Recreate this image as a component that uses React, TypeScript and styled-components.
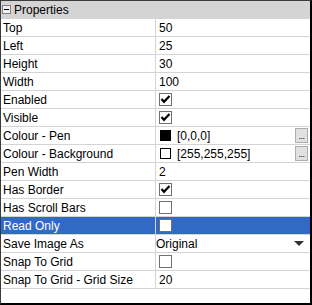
import React from "react"
import styled, { createGlobalStyle } from "styled-components"

const GlobalStyle = createGlobalStyle`
  html, body {
    margin: 0;
    padding: 0;
    background: #ffffff;
  }
  * {
    box-sizing: border-box;
  }
`

const Panel = styled.div`
  width: 312px;
  height: 305px;
  background: #ffffff;
  border-left: 1px solid #3c3c3c;
  border-top: 1px solid #3c3c3c;
  border-right: 2px solid #000000;
  border-bottom: 2px solid #000000;
  font-family: "Liberation Sans", Arial, sans-serif;
  font-size: 12px;
  color: #000000;
  overflow: hidden;
`

const Header = styled.div`
  height: 18px;
  background: #d4d4d4;
  display: flex;
  align-items: center;
  gap: 3px;
  padding-left: 1px;
  border-bottom: 1px solid #d4d4d4;
`

const Collapse = styled.span`
  width: 9px;
  height: 9px;
  border: 1px solid #808080;
  background: #f0f0f0;
  display: flex;
  align-items: center;
  justify-content: center;
  &::after {
    content: "";
    width: 5px;
    height: 1px;
    background: #000000;
  }
`

const Grid = styled.div`
  display: grid;
  grid-template-columns: 155px 1fr;
`

const Cell = styled.div<{ $selected?: boolean }>`
  height: 18px;
  border-bottom: 1px solid #d4d4d4;
  display: flex;
  align-items: center;
  background: ${(p) => (p.$selected ? "#316ac5" : "#ffffff")};
  color: ${(p) => (p.$selected ? "#ffffff" : "#000000")};
  white-space: nowrap;
`

const Label = styled(Cell)`
  padding-left: 2px;
  border-right: 1px solid #d4d4d4;
`

const Value = styled(Cell)<{ $tight?: boolean }>`
  padding-left: ${(p) => (p.$tight ? "0px" : "3px")};
  padding-right: 2px;
  gap: 6px;
`

const Check = styled.span`
  width: 13px;
  height: 13px;
  border: 1px solid #707070;
  background: #ffffff;
  display: flex;
  align-items: center;
  justify-content: center;
`

const Swatch = styled.span<{ $fill: string }>`
  width: 11px;
  height: 11px;
  border: 1px solid #000000;
  background: ${(p) => p.$fill};
  margin-left: 1px;
`

const Text = styled.span`
  flex: 1;
`

const Ellipsis = styled.span`
  width: 13px;
  height: 15px;
  border: 1px solid #adadad;
  background: #e1e1e1;
  display: flex;
  align-items: flex-end;
  justify-content: center;
  font-size: 9px;
  line-height: 8px;
  letter-spacing: -0.5px;
  padding-bottom: 2px;
  overflow: hidden;
`

const Arrow = styled.span`
  width: 0;
  height: 0;
  border-left: 5px solid transparent;
  border-right: 5px solid transparent;
  border-top: 5px solid #333333;
  margin-right: 4px;
`

type Row =
  | { label: string; kind: "text"; value: string }
  | { label: string; kind: "check"; value: boolean }
  | { label: string; kind: "colour"; value: string; fill: string }
  | { label: string; kind: "select"; value: string }

const rows: Row[] = [
  { label: "Top", kind: "text", value: "50" },
  { label: "Left", kind: "text", value: "25" },
  { label: "Height", kind: "text", value: "30" },
  { label: "Width", kind: "text", value: "100" },
  { label: "Enabled", kind: "check", value: true },
  { label: "Visible", kind: "check", value: true },
  { label: "Colour - Pen", kind: "colour", value: "[0,0,0]", fill: "#000000" },
  { label: "Colour - Background", kind: "colour", value: "[255,255,255]", fill: "#ffffff" },
  { label: "Pen Width", kind: "text", value: "2" },
  { label: "Has Border", kind: "check", value: true },
  { label: "Has Scroll Bars", kind: "check", value: false },
  { label: "Read Only", kind: "check", value: false },
  { label: "Save Image As", kind: "select", value: "Original" },
  { label: "Snap To Grid", kind: "check", value: false },
  { label: "Snap To Grid - Grid Size", kind: "text", value: "20" },
]

function Tick() {
  return (
    <svg width="11" height="11" viewBox="0 0 11 11">
      <path d="M1.5 5 L4 7.8 L9.5 2" fill="none" stroke="#000" strokeWidth="2.2" />
    </svg>
  )
}

function ValueContent({ row }: { row: Row }) {
  switch (row.kind) {
    case "check":
      return <Check>{row.value && <Tick />}</Check>
    case "colour":
      return (
        <>
          <Swatch $fill={row.fill} />
          <Text>{row.value}</Text>
          <Ellipsis>...</Ellipsis>
        </>
      )
    case "select":
      return (
        <>
          <Text>{row.value}</Text>
          <Arrow />
        </>
      )
    default:
      return <Text>{row.value}</Text>
  }
}

export default function App() {
  const selected = "Read Only"
  return (
    <>
      <GlobalStyle />
      <Panel>
        <Header>
          <Collapse />
          Properties
        </Header>
        <Grid>
          {rows.map((row) => (
            <React.Fragment key={row.label}>
              <Label $selected={row.label === selected}>{row.label}</Label>
              <Value $selected={row.label === selected} $tight={row.kind === "select"}>
                <ValueContent row={row} />
              </Value>
            </React.Fragment>
          ))}
        </Grid>
      </Panel>
    </>
  )
}
